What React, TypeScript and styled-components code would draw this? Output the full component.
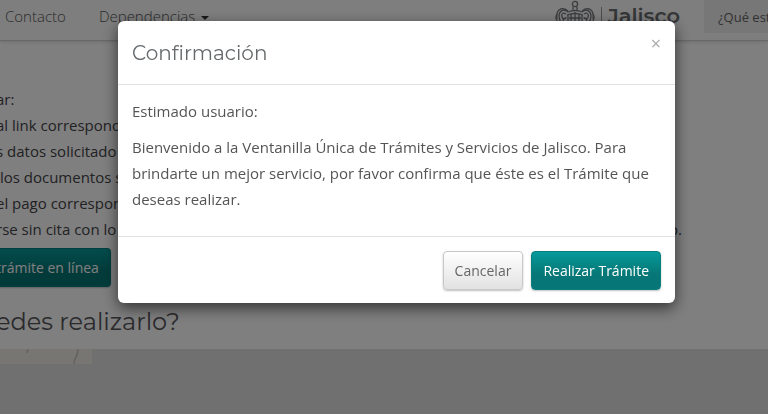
import React from "react";
import styled, { createGlobalStyle } from "styled-components";

const GlobalStyle = createGlobalStyle`
  *, *::before, *::after { box-sizing: border-box; }
  html, body { margin: 0; overflow-x: hidden; }
  body {
    background: #ffffff;
    color: #555555;
    font: 15px/26px "Open Sans", "Noto Sans", sans-serif;
  }
  h2, h3, p, ul { margin: 0; padding: 0; font-weight: 400; }
  button, input { font: inherit; }
`;

const displayFont = `Montserrat, Inter, "Open Sans", sans-serif`;

const Page = styled.div`
  display: flex;
  flex-direction: column;
  min-height: 100vh;
`;

const Navbar = styled.header`
  display: flex;
  align-items: flex-start;
  height: 41px;
  padding-left: 5px;
  background: #fdfdfd;
  border-bottom: 1px solid #d0d0d0;
  box-shadow: 0 1px 3px rgba(0, 0, 0, 0.15);
`;

const Nav = styled.nav`
  display: flex;
  flex: 1;
  gap: 33px;
  padding-top: 3px;
`;

const NavLink = styled.a`
  display: flex;
  align-items: center;
  gap: 6px;
  color: #555555;
  font-weight: 300;
  text-decoration: none;
`;

const Caret = styled.span`
  margin-top: 4px;
  border: 4px solid transparent;
  border-top-color: #333333;
  border-bottom-width: 0;
`;

const Brand = styled.a`
  display: flex;
  align-items: center;
  gap: 6px;
  height: 32px;
  margin-right: 24px;
  color: #6b6e72;
  font: 600 21px/32px ${displayFont};
  text-decoration: none;
`;

const Divider = styled.span`
  width: 1px;
  height: 18px;
  background: #999999;
`;

const Search = styled.input`
  width: 64px;
  height: 33px;
  padding: 0 0 0 14px;
  border: 0;
  border-radius: 0;
  background: #eeeeee;
  color: #555555;
  font-size: 13px;
  &::placeholder { color: #666666; opacity: 1; }
`;

const Content = styled.main`
  display: flex;
  flex: 1;
  flex-direction: column;
  align-items: stretch;
  margin-left: -4px;
  padding-top: 45px;
`;

const Steps = styled.ul`
  list-style: none;
  color: #444448;
  padding-right: 86px;
`;

const Step = styled.li`
  display: flex;
  justify-content: space-between;
  white-space: nowrap;
`;

const Button = styled.button<{ $primary?: boolean }>`
  height: 39px;
  padding: 0 11px;
  border: 1px solid ${(p) => (p.$primary ? "#087f7e" : "#c8c8c8")};
  border-radius: 4px;
  background: ${(p) =>
    p.$primary
      ? "linear-gradient(#07999a, #067776 60%)"
      : "linear-gradient(#ffffff, #e2e2e2)"};
  color: ${(p) => (p.$primary ? "#ffffff" : "#666666")};
  font-size: 14px;
  font-weight: ${(p) => (p.$primary ? 500 : 400)};
  box-shadow: 0 1px 2px rgba(0, 0, 0, 0.25);
  white-space: nowrap;
`;

const OnlineButton = styled(Button)`
  align-self: flex-start;
  margin-top: 6px;
  padding-left: 0;
  border-left: 0;
  border-radius: 0 4px 4px 0;
`;

const SectionTitle = styled.h2`
  margin-top: 20px;
  color: #55555a;
  font: 400 24px/30px ${displayFont};
`;

const MapPanel = styled.section`
  flex: 1;
  margin-top: 12px;
  background: #e0e0e0;
`;

const Tile = styled.svg`
  display: block;
  width: 96px;
  height: 15px;
  background: #efece5;
`;

const Backdrop = styled.div`
  position: fixed;
  inset: 0;
  display: flex;
  align-items: flex-start;
  justify-content: center;
  padding: 21px 0 0 25px;
  background: rgba(0, 0, 0, 0.5);
`;

const Dialog = styled.section`
  width: 100%;
  max-width: 557px;
  border-radius: 6px;
  background: #ffffff;
  box-shadow: 0 5px 15px rgba(0, 0, 0, 0.6);
`;

const DialogHeader = styled.header`
  display: flex;
  justify-content: space-between;
  align-items: flex-start;
  padding: 14px 14px 12px;
  border-bottom: 1px solid #e2e2e2;
`;

const DialogTitle = styled.h3`
  color: #666a6c;
  font: 400 20px/37px ${displayFont};
`;

const Close = styled.button`
  padding: 0;
  border: 0;
  background: none;
  color: #aaaaaa;
  font-size: 18px;
  line-height: 16px;
`;

const DialogBody = styled.div`
  display: grid;
  gap: 10px;
  padding: 13px 14px 24px;
`;

const DialogFooter = styled.footer`
  display: flex;
  justify-content: flex-end;
  gap: 8px;
  padding: 14px 14px 13px;
  border-top: 1px solid #e2e2e2;
`;

const Crest = () => (
  <svg width="40" height="32" viewBox="0 0 40 32" fill="none" stroke="#777b80" strokeWidth="1.3" aria-hidden="true">
    <circle cx="20" cy="4" r="2.6" />
    <path d="M18 7v4M22 7v4M13 12q7-3 14 0M12 15q8-3 16 0" />
    <path d="M13 12c-4-4-9-1-9 4 0 6 5 10 9 12M27 12c4-4 9-1 9 4 0 6-5 10-9 12" />
    <path d="M11 14c-3-2-5 0-4 3s4 2 4 0M29 14c3-2 5 0 4 3s-4 2-4 0M2 14c-2 3-1 7 2 9M38 14c2 3 1 7-2 9" />
    <path d="M13 11q-5-4-9-1-3 3-2 9M27 11q5-4 9-1 3 3 2 9M10 18q-3 1-1 4M30 18q3 1 1 4" />
    <path d="M13 15v9c0 3 4 4 7 6 3-2 7-3 7-6v-9M16 14v10M20 12v15M24 14v10M14 18h12" />
  </svg>
);

const steps = [
  ["ar:"],
  ["al link correspond"],
  ["s datos solicitado"],
  ["\u00a0los documentos s"],
  ["el pago correspon"],
  ["rse sin cita con lo", "o."],
];

export default function App() {
  return (
    <>
      <GlobalStyle />
      <Page>
        <Navbar>
          <Nav>
            <NavLink href="#contacto">Contacto</NavLink>
            <NavLink href="#dependencias">
              Dependencias <Caret />
            </NavLink>
          </Nav>
          <Brand href="#inicio">
            <Crest />
            <Divider />
            Jalisco
          </Brand>
          <Search aria-label="Buscar" placeholder="¿Qué estás buscando?" />
        </Navbar>
        <Content>
          <Steps>
            {steps.map((parts) => (
              <Step key={parts[0]}>
                {parts.map((part) => (
                  <span key={part}>{part}</span>
                ))}
              </Step>
            ))}
          </Steps>
          <OnlineButton type="button" $primary>
            trámite en línea
          </OnlineButton>
          <SectionTitle>edes realizarlo?</SectionTitle>
          <MapPanel aria-label="Mapa">
            <Tile viewBox="0 0 96 15" fill="none" stroke="#c5c3bc" strokeWidth="1.5">
              <path d="M32 0l-1 4M82 0q0 5-2 8t-2 7" />
            </Tile>
          </MapPanel>
        </Content>
      </Page>
      <Backdrop>
        <Dialog role="dialog" aria-modal="true" aria-labelledby="dialog-title">
          <DialogHeader>
            <DialogTitle id="dialog-title">Confirmación</DialogTitle>
            <Close type="button" aria-label="Cerrar">×</Close>
          </DialogHeader>
          <DialogBody>
            <p>Estimado usuario:</p>
            <p>
              Bienvenido a la Ventanilla Única de Trámites y Servicios de Jalisco. Para brindarte un
              mejor servicio, por favor confirma que éste es el Trámite que deseas realizar.
            </p>
          </DialogBody>
          <DialogFooter>
            <Button type="button">Cancelar</Button>
            <Button type="button" $primary>Realizar Trámite</Button>
          </DialogFooter>
        </Dialog>
      </Backdrop>
    </>
  );
}
